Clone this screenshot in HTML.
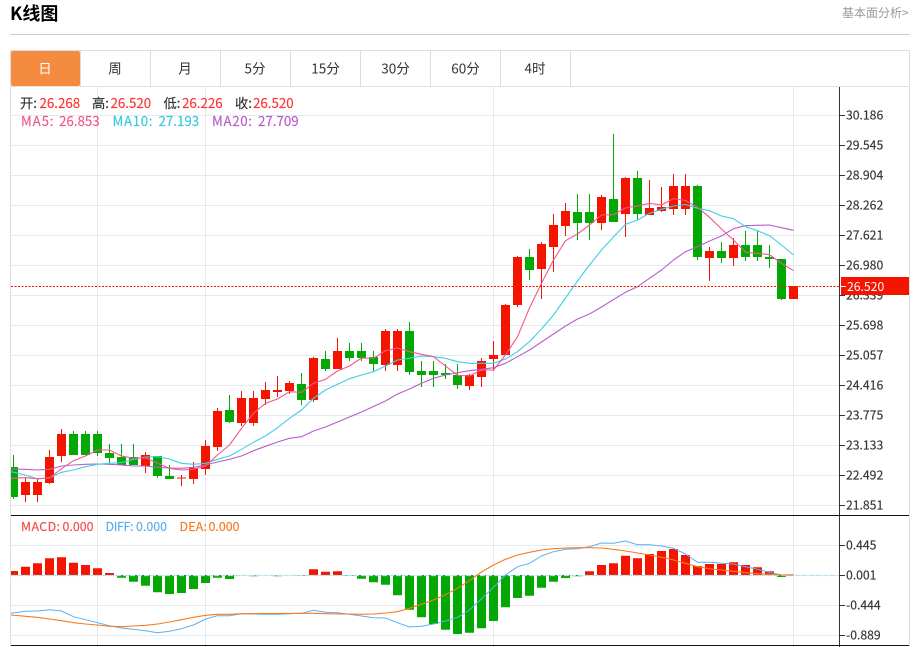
<!DOCTYPE html>
<html lang="zh">
<head>
<meta charset="utf-8">
<title>K线图</title>
<style>
html,body{margin:0;padding:0;background:#fff;width:917px;height:647px;overflow:hidden}
svg{display:block}
text{font-family:"Noto Sans CJK SC","Liberation Sans",sans-serif}
.s text{stroke:currentColor;stroke-width:.15px}
</style>
</head>
<body>
<svg width="917" height="647" viewBox="0 0 917 647" xmlns="http://www.w3.org/2000/svg">
<rect width="917" height="647" fill="#fff"/>
<text x="10" y="20" font-size="18" font-weight="700" fill="#000">K线图</text>
<text x="842" y="17" font-size="12" fill="#999">基本面分析&gt;</text>
<path d="M10 34.5H910" stroke="#ccc" stroke-width="1"/>
<path d="M10.5 647V50.5H909.5V647" fill="none" stroke="#dedede"/>
<path d="M10 86.5H910" stroke="#e2e2e2"/>
<path d="M150.5 51V86M220.5 51V86M290.5 51V86M360.5 51V86M430.5 51V86M500.5 51V86M570.5 51V86M80.5 51V86" stroke="#dcdcdc"/>
<rect x="11" y="51" width="69" height="35" rx="2" fill="#f58b3f"/>
<g font-size="13.5" text-anchor="middle" fill="#333">
<text x="45" y="73.5" fill="#fff">日</text>
<text x="115" y="73.5">周</text>
<text x="185" y="73.5">月</text>
<text x="255" y="73.5">5分</text>
<text x="325.5" y="73.5">15分</text>
<text x="395.5" y="73.5">30分</text>
<text x="465.5" y="73.5">60分</text>
<text x="535" y="73.5">4时</text>
</g>
<!-- grid -->
<path d="M11 115.5H839M11 145.5H839M11 175.5H839M11 205.5H839M11 235.5H839M11 265.5H839M11 295.5H839M11 325.5H839M11 355.5H839M11 385.5H839M11 415.5H839M11 445.5H839M11 475.5H839M11 505.5H839M11 545.5H839M11 575.5H839M11 605.5H839M11 635.5H839M97.5 87V647M205.5 87V647M493.5 87V647M793.5 87V647" stroke="#e4e9ee" stroke-width="1" fill="none"/>
<!-- candle wicks -->
<path stroke="#f41500" stroke-width="1" fill="none" d="M25.5 478V502M37.5 479V502M49.5 450V484M61.5 429V462M145.5 452V473M181.5 475V486M193.5 462V484M205.5 440V475M217.5 408V451M241.5 391V426M253.5 391V426M265.5 382V405M277.5 376V397M289.5 381V394M313.5 357V402M337.5 338V369M385.5 329V371M397.5 329V371M469.5 374V390M481.5 358V387M493.5 341V371M505.5 304V355M517.5 256V307M541.5 242V299M553.5 214V272M565.5 203V236M601.5 195V230M625.5 177V237M649.5 180V215M661.5 187V212M673.5 174V215M685.5 174V215M709.5 247V281M733.5 238V266"/>
<path stroke="#04a804" stroke-width="1" fill="none" d="M13.5 455V499M73.5 431V455M85.5 431V455M97.5 431V456M109.5 444V463M121.5 444V465M133.5 444V465M157.5 456V478M169.5 465V479M229.5 395V423M301.5 373V405M325.5 351V371M349.5 343V361M361.5 343V361M373.5 351V371M409.5 322V375M421.5 361V387M433.5 361V387M445.5 364V379M457.5 364V389M529.5 249V280M577.5 194V240M589.5 194V240M613.5 134V222M637.5 171V220M697.5 185V260M721.5 242V263M745.5 231V261M757.5 231V261M769.5 245V268M781.5 259V300"/>
<!-- candle bodies -->
<path fill="#f41500" d="M21 482h9V495h-9zM33 482h9V495h-9zM45 457h9V483h-9zM57 434h9V456h-9zM141 455h9V466h-9zM177 477.5h9V478.5h-9zM189 468h9V479h-9zM201 446h9V469h-9zM213 411h9V447h-9zM237 398h9V423h-9zM249 398h9V423h-9zM261 390h9V399h-9zM273 390h9V392h-9zM285 383h9V391h-9zM309 358h9V400h-9zM333 351h9V369h-9zM381 331h9V365h-9zM393 331h9V365h-9zM465 375h9V386h-9zM477 361h9V377h-9zM489 355h9V359h-9zM501 305h9V355h-9zM513 257h9V305h-9zM537 244h9V269h-9zM549 225h9V247h-9zM561 211h9V226h-9zM597 197h9V223h-9zM621 178h9V214h-9zM645 208h9V215h-9zM657 207h9V211h-9zM669 186h9V209h-9zM681 186h9V209h-9zM705 251h9V258h-9zM729 245h9V258h-9zM789 286h9V299h-9z"/>
<path fill="#04a804" d="M11 467h7V497h-7zM69 434h9V455h-9zM81 434h9V455h-9zM93 434h9V453h-9zM105 453h9V458h-9zM117 457h9V465h-9zM129 457h9V465h-9zM153 456h9V476h-9zM165 476h9V479h-9zM225 410h9V422h-9zM297 384h9V400h-9zM321 359h9V369h-9zM345 351h9V358h-9zM357 351h9V358h-9zM369 357h9V364h-9zM405 331h9V372h-9zM417 371h9V375h-9zM429 371h9V375h-9zM441 373h9V375h-9zM453 375h9V385h-9zM525 257h9V270h-9zM573 212h9V223h-9zM585 212h9V223h-9zM609 199h9V222h-9zM633 178h9V214h-9zM693 186h9V257h-9zM717 251h9V258h-9zM741 245h9V257h-9zM753 245h9V257h-9zM765 257h9V259h-9zM777 259h9V299h-9z"/>
<!-- MA lines -->
<polyline fill="none" stroke="#b85fca" stroke-width="1.1" stroke-linejoin="round" points="11,469 25.5,469.3 37.5,470 49.5,469.3 61.5,466 73.5,465 85.5,464.3 97.5,464 109.5,464.3 121.5,465 133.5,466 145.5,466 157.5,467.3 169.5,468 181.5,468.3 193.5,467.3 205.5,465 217.5,462 229.5,459.3 241.5,456 253.5,450.7 265.5,446.3 277.5,442 289.5,438.3 301.5,436.7 313.5,431 325.5,427 337.5,422 349.5,417 361.5,412 373.5,406.5 385.5,401 397.5,394 409.5,389 421.5,383.3 433.5,378.3 445.5,375 457.5,372.7 469.5,370.7 481.5,369.3 493.5,367.7 505.5,363.3 517.5,356.7 529.5,350 541.5,342 553.5,334 565.5,326 577.5,319 589.5,314 601.5,307 613.5,299.5 625.5,292.3 637.5,286.7 649.5,278.3 661.5,270 673.5,260 685.5,251.7 697.5,246.7 709.5,241 721.5,236 733.5,228.7 745.5,225.7 757.5,225.3 769.5,225 781.5,227.7 793.5,230.3"/>
<polyline fill="none" stroke="#3ed0e4" stroke-width="1.1" stroke-linejoin="round" points="11,471.7 25.5,475 37.5,479 49.5,477.7 61.5,472.3 73.5,470 85.5,466.7 97.5,464.3 109.5,463.3 121.5,462.7 133.5,459.3 145.5,457 157.5,456.7 169.5,459 181.5,463.3 193.5,464.3 205.5,463.3 217.5,459.3 229.5,456 241.5,449.3 253.5,442.3 265.5,436 277.5,427.7 289.5,418.3 301.5,410 313.5,398.3 325.5,390 337.5,384.3 349.5,378.7 361.5,375 373.5,371.7 385.5,366 397.5,360 409.5,358.3 421.5,356 433.5,356.7 445.5,358.3 457.5,361.7 469.5,363.3 481.5,363.3 493.5,363.3 505.5,359 517.5,351.7 529.5,341.7 541.5,329 553.5,315 565.5,298 577.5,281 589.5,265 601.5,250 613.5,237 625.5,224.3 637.5,220 649.5,213.3 661.5,209.3 673.5,206 685.5,204.5 697.5,208.3 709.5,210.7 721.5,216 733.5,218.7 745.5,226.7 757.5,230.7 769.5,235.7 781.5,245 793.5,255"/>
<polyline fill="none" stroke="#f2588f" stroke-width="1.1" stroke-linejoin="round" points="11,478.3 25.5,477.7 37.5,478.7 49.5,478 61.5,468.7 73.5,460.7 85.5,456 97.5,450 109.5,450 121.5,456 133.5,458.3 145.5,457.7 157.5,463.3 169.5,468.3 181.5,470 193.5,469.3 205.5,466 217.5,455 229.5,445 241.5,428.3 253.5,413.3 265.5,403.3 277.5,399 289.5,391.7 301.5,392.3 313.5,383.3 325.5,379.3 337.5,371 349.5,366 361.5,358 373.5,358.3 385.5,350.7 397.5,348 409.5,351.7 421.5,354.3 433.5,356.7 445.5,366 457.5,375.3 469.5,376 481.5,370 493.5,370 505.5,355 517.5,336.7 529.5,308 541.5,283.3 553.5,260 565.5,240.7 577.5,234 589.5,225 601.5,215 613.5,214.7 625.5,208 637.5,206 649.5,203.3 661.5,205 673.5,198.7 685.5,200.5 697.5,207.3 709.5,217.3 721.5,229 733.5,240 745.5,252.3 757.5,253.3 769.5,254.7 781.5,263.3 793.5,270.7"/>
<!-- current price line -->
<path d="M11 286.5H839" stroke="#f41500" stroke-width="1" stroke-dasharray="2 1.5"/>
<!-- MACD bars -->
<path fill="#f41500" d="M11 571h7V575h-7zM21 566.7h9V575h-9zM33 563.3h9V575h-9zM45 558.3h9V575h-9zM57 557.3h9V575h-9zM69 562.7h9V575h-9zM81 565h9V575h-9zM93 568.3h9V575h-9zM105 573h9V575h-9zM309 569.3h9V575h-9zM321 571.7h9V575h-9zM333 571.3h9V575h-9zM585 571.3h9V575h-9zM597 565h9V575h-9zM609 563.3h9V575h-9zM621 555.7h9V575h-9zM633 558.3h9V575h-9zM645 554h9V575h-9zM657 551h9V575h-9zM669 549h9V575h-9zM681 555h9V575h-9zM693 566h9V575h-9zM705 564h9V575h-9zM717 564h9V575h-9zM729 562.3h9V575h-9zM741 565h9V575h-9zM753 567.3h9V575h-9zM765 571.3h9V575h-9z"/>
<path fill="#04a804" d="M117 575h9V577.7h-9zM129 575h9V581.7h-9zM141 575h9V585.7h-9zM153 575h9V592.3h-9zM165 575h9V594h-9zM177 575h9V593h-9zM189 575h9V589h-9zM201 575h9V583h-9zM213 575h9V577.7h-9zM225 575h9V579h-9zM249 575.5h9V576.3h-9zM273 575.5h9V576.3h-9zM297 575.5h9V576h-9zM345 575.5h9V576h-9zM357 575h9V578.7h-9zM369 575h9V582.3h-9zM381 575h9V584.7h-9zM393 575h9V595.3h-9zM405 575h9V609.7h-9zM417 575h9V617.3h-9zM429 575h9V624h-9zM441 575h9V629.7h-9zM453 575h9V634h-9zM465 575h9V632.7h-9zM477 575h9V628.3h-9zM489 575h9V621h-9zM501 575h9V607.3h-9zM513 575h9V598h-9zM525 575h9V595.7h-9zM537 575h9V587.7h-9zM549 575h9V581.7h-9zM561 575h9V578h-9zM573 575h9V576.3h-9zM777 575h9V577h-9z"/>
<path d="M11 575.5H838" stroke="#b5dff0" stroke-width="1.2" stroke-dasharray="5 2" fill="none"/>
<polyline fill="none" stroke="#5cb0f2" stroke-width="1" stroke-linejoin="round" points="11,613.3 25.5,611.3 37.5,611 49.5,609.7 61.5,611 73.5,616.7 85.5,619.7 97.5,622.7 109.5,625.7 121.5,628 133.5,629.3 145.5,630.7 157.5,632.7 169.5,631.3 181.5,628.7 193.5,625 205.5,619 217.5,615.7 229.5,615.7 241.5,613.7 253.5,614 265.5,614.3 277.5,614.3 289.5,613.7 301.5,613.3 313.5,610.3 325.5,612.3 337.5,612.7 349.5,614.3 361.5,616 373.5,617.7 385.5,618 397.5,622.7 409.5,627 421.5,626.3 433.5,624 445.5,621 457.5,617.3 469.5,610 481.5,598.7 493.5,587.3 505.5,575 517.5,566.7 529.5,563.3 541.5,556 553.5,551.7 565.5,549.3 577.5,548.7 589.5,546.7 601.5,543 613.5,543.3 625.5,541 637.5,544.7 649.5,544.7 661.5,546 673.5,548.3 685.5,554 697.5,562.3 709.5,562.3 721.5,563.3 733.5,564 745.5,566.7 757.5,569.3 769.5,572.3 781.5,575 793.5,575"/>
<polyline fill="none" stroke="#f77b20" stroke-width="1.1" stroke-linejoin="round" points="11,615 25.5,616.3 37.5,617.3 49.5,619 61.5,620.7 73.5,622.7 85.5,624 97.5,625 109.5,626.3 121.5,626.7 133.5,626 145.5,625.3 157.5,624 169.5,622 181.5,619.7 193.5,617.3 205.5,615.3 217.5,614.3 229.5,614.3 241.5,613.7 253.5,613.5 265.5,613.5 277.5,613.5 289.5,613.4 301.5,613.3 313.5,613.3 325.5,613.7 337.5,614 349.5,614 361.5,614.3 373.5,614 385.5,613 397.5,611.7 409.5,608.3 421.5,604.3 433.5,600 445.5,594.7 457.5,588.3 469.5,580.7 481.5,572 493.5,565 505.5,559.3 517.5,555 529.5,552.3 541.5,550 553.5,548.7 565.5,548 577.5,547.7 589.5,547.7 601.5,548 613.5,549.3 625.5,551 637.5,553 649.5,555 661.5,557.3 673.5,560 685.5,563.3 697.5,566.7 709.5,568.7 721.5,570 733.5,571.3 745.5,572.7 757.5,573.7 769.5,574.3 781.5,575 793.5,574.7"/>
<!-- axes -->
<path d="M839.5 87V647" stroke="#333" stroke-width="1"/>
<path d="M11 515.5H909M11 645.5H909" stroke="#111" stroke-width="1"/>
<path d="M840 115.5h5M840 145.5h5M840 175.5h5M840 205.5h5M840 235.5h5M840 265.5h5M840 295.5h5M840 325.5h5M840 355.5h5M840 385.5h5M840 415.5h5M840 445.5h5M840 475.5h5M840 505.5h5M840 545.5h5M840 575.5h5M840 605.5h5M840 635.5h5" stroke="#333" stroke-width="1"/>
<g font-size="12.2" fill="#333" color="#333" class="s">
<text x="846" y="119.5">30.186</text>
<text x="846" y="149.5">29.545</text>
<text x="846" y="179.5">28.904</text>
<text x="846" y="209.5">28.262</text>
<text x="846" y="239.5">27.621</text>
<text x="846" y="269.5">26.980</text>
<text x="846" y="299.5">26.339</text>
<text x="846" y="329.5">25.698</text>
<text x="846" y="359.5">25.057</text>
<text x="846" y="389.5">24.416</text>
<text x="846" y="419.5">23.775</text>
<text x="846" y="449.5">23.133</text>
<text x="846" y="479.5">22.492</text>
<text x="846" y="509.5">21.851</text>
<text x="846" y="549.5">0.445</text>
<text x="846" y="579.5">0.001</text>
<text x="846" y="609.5">-0.444</text>
<text x="846" y="639.5">-0.889</text>
</g>
<rect x="841" y="277" width="68" height="18" fill="#f41500"/>
<path d="M841 286.5h5" stroke="#fff"/>
<text x="847" y="291" font-size="12.2" fill="#fff">26.520</text>
<!-- legends -->
<g font-size="13.3" class="s">
<text x="20" y="108" fill="#333" color="#333">开:</text><text x="39.5" y="108" fill="#f33" color="#f33">26.268</text>
<text x="92" y="108" fill="#333" color="#333">高:</text><text x="110.5" y="108" fill="#f33" color="#f33">26.520</text>
<text x="163.5" y="108" fill="#333" color="#333">低:</text><text x="182" y="108" fill="#f33" color="#f33">26.226</text>
<text x="235" y="108" fill="#333" color="#333">收:</text><text x="253" y="108" fill="#f33" color="#f33">26.520</text>
<text x="21" y="126" fill="#f0568e" color="#f0568e" textLength="32.5">MA5:</text><text x="59" y="126" fill="#f0568e" color="#f0568e">26.853</text>
<text x="112.5" y="126" fill="#35c9df" color="#35c9df" textLength="40">MA10:</text><text x="158.5" y="126" fill="#35c9df" color="#35c9df">27.193</text>
<text x="212" y="126" fill="#b85cc8" color="#b85cc8" textLength="40">MA20:</text><text x="258" y="126" fill="#b85cc8" color="#b85cc8">27.709</text>
</g>
<g font-size="12.4" class="s">
<text x="21" y="531" fill="#f34a4a" color="#f34a4a" textLength="39">MACD:</text><text x="62.5" y="531" fill="#f34a4a" color="#f34a4a">0.000</text>
<text x="105.5" y="531" fill="#56aef2" color="#56aef2" textLength="28">DIFF:</text><text x="136" y="531" fill="#56aef2" color="#56aef2">0.000</text>
<text x="179.5" y="531" fill="#f77b20" color="#f77b20" textLength="27.5">DEA:</text><text x="208.5" y="531" fill="#f77b20" color="#f77b20">0.000</text>
</g>
</svg>
</body>
</html>
